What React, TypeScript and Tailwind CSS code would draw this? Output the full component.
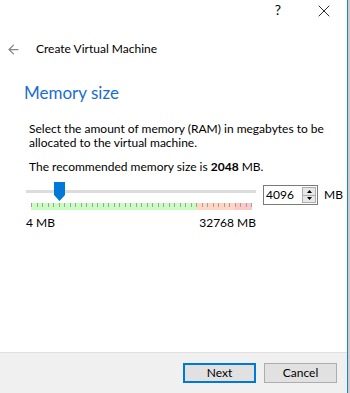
import { ArrowLeft, X } from 'lucide-react';

const TICKS = Array.from({ length: 41 }, (_, i) => i);

const MemorySlider = () => {
  return (
    <div className="relative w-[230px] h-[28px]">
      {/* track */}
      <div className="absolute left-0 right-0 top-[8px] h-[3px] bg-[#dcdcdc]" />
      {/* colour band */}
      <div className="absolute left-[5px] top-[21px] h-[7px] w-[221px] flex">
        <div className="w-[166px] bg-[#c8fcc0]" />
        <div className="w-[38px] bg-[#ffd6c4]" />
        <div className="w-[17px] bg-[#ffc8c8]" />
      </div>
      {/* ticks */}
      {TICKS.map((i) => (
        <div
          key={i}
          className="absolute top-[21px] w-px h-[4px] bg-[#a0a0a0]"
          style={{ left: 5 + Math.round((i * 220) / 40) }}
        />
      ))}
      {/* thumb */}
      <svg className="absolute left-[28px] top-0" width="11" height="19" viewBox="0 0 11 19">
        <path d="M0 0 H11 V13 L5.5 19 L0 13 Z" fill="#0078d7" />
      </svg>
    </div>
  );
};

const SpinBox = () => (
  <div className="flex w-[55px] h-[20px] border border-[#7a7a7a] bg-white">
    <div className="flex-1 pl-[2px] leading-[18px] text-[12px] text-black">4096</div>
    <div className="w-[14px] my-px mr-px flex flex-col border border-[#adadad] bg-[#e8e8e8]">
      <div className="flex-1 flex items-center justify-center border-b border-[#adadad]">
        <svg width="5" height="3" viewBox="0 0 5 3">
          <path d="M0 3 L2.5 0 L5 3 Z" fill="#000" />
        </svg>
      </div>
      <div className="flex-1 flex items-center justify-center">
        <svg width="5" height="3" viewBox="0 0 5 3">
          <path d="M0 0 L2.5 3 L5 0 Z" fill="#000" />
        </svg>
      </div>
    </div>
  </div>
);

export default function App() {
  return (
    <div className="w-[350px] h-[393px] flex bg-white text-[12px] text-black font-['Lato',sans-serif]">
      <div className="w-[347px] shrink-0 flex flex-col">
        {/* caption bar */}
        <div className="h-[28px] flex items-start justify-end pt-[2px]">
          <span className="w-[46px] text-center text-[14px] leading-[16px]">?</span>
          <div className="w-[46px] h-[18px] flex items-center justify-center">
            <X className="w-[20px] h-[20px]" strokeWidth={1} />
          </div>
        </div>

        {/* header */}
        <div className="h-[40px] flex items-center pl-[6px] pt-[2px]">
          <ArrowLeft className="w-[15px] h-[15px] text-[#858585]" strokeWidth={2} />
          <span className="ml-[15px] text-[12px]">Create Virtual Machine</span>
        </div>

        {/* page */}
        <div className="flex-1 flex flex-col pl-[24px] pt-[14px]">
          <h1 className="text-[17px] leading-[22px] text-[#1b6dcd]">Memory size</h1>
          <div className="pl-[5px] pt-[18px] leading-[14px] whitespace-nowrap">
            <p>Select the amount of memory (RAM) in megabytes to be</p>
            <p>allocated to the virtual machine.</p>
            <p className="mt-[10px]">
              The recommended memory size is <b>2048</b> MB.
            </p>
          </div>
          <div className="flex items-start mt-[8px] pl-[2px]">
            <div className="flex flex-col">
              <MemorySlider />
              <div className="flex justify-between w-[230px] mt-[6px] leading-[14px]">
                <span>4 MB</span>
                <span>32768 MB</span>
              </div>
            </div>
            <div className="ml-[7px] mt-[3px] flex items-center">
              <SpinBox />
              <span className="ml-[6px]">MB</span>
            </div>
          </div>
        </div>

        {/* footer */}
        <div className="h-[41px] bg-[#f0f0f0] border-t border-[#dfdfdf] flex items-start justify-end pt-[10px] pr-[10px] gap-[8px]">
          <button className="w-[73px] h-[20px] bg-[#e1e1e1] border-2 border-[#0078d7] text-[12px] leading-[16px]">
            Next
          </button>
          <button className="w-[73px] h-[20px] bg-[#e1e1e1] border border-[#adadad] text-[12px] leading-[18px]">
            Cancel
          </button>
        </div>
      </div>
      <div className="w-px bg-[#1883d7]" />
      <div className="w-[2px] bg-[#cdcdcd]" />
    </div>
  );
}
